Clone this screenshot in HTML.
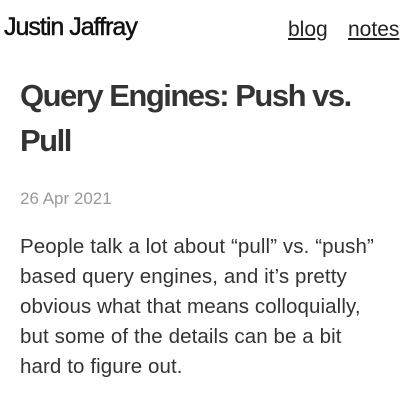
<!DOCTYPE html>
<html><head><style>
body{margin:0;width:400px;height:400px;overflow:hidden;background:#fff;font-family:"Liberation Sans",sans-serif;color:#222;}
.hdr{position:absolute;top:13px;left:4px;font-size:25px;font-weight:normal;letter-spacing:-1px;color:#111;-webkit-text-stroke:0.5px #111;}
.nav{position:absolute;top:18px;font-size:21px;color:#222;text-decoration:underline;}
h1{position:absolute;top:73px;left:20px;margin:0;font-size:31px;font-weight:bold;line-height:45px;letter-spacing:-1.5px;color:#333;white-space:nowrap;}
.date{position:absolute;top:189px;left:20px;font-size:17px;color:#999;}
p{position:absolute;top:232px;left:20px;margin:0;font-size:20.5px;line-height:30px;color:#333;white-space:nowrap;letter-spacing:0.1px;}
</style></head><body>
<div class="hdr">Justin Jaffray</div>
<div class="nav" style="left:288px">blog</div>
<div class="nav" style="left:348px">notes</div>
<h1>Query Engines: Push vs.<br>Pull</h1>
<div class="date">26 Apr 2021</div>
<p>People talk a lot about “pull” vs. “push”<br>based query engines, and it’s pretty<br>obvious what that means colloquially,<br>but some of the details can be a bit<br>hard to figure out.</p>
</body></html>
